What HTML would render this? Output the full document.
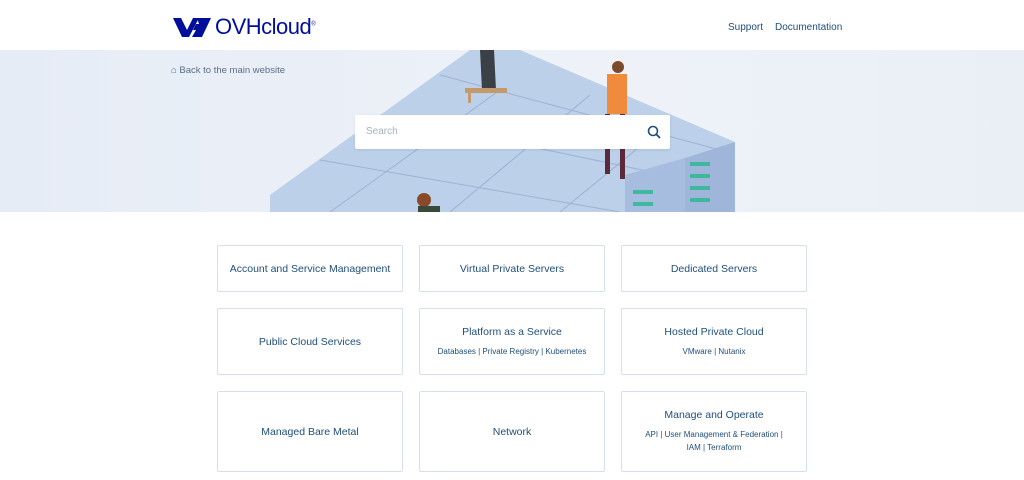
<!DOCTYPE html>
<html><head><meta charset="utf-8"><style>
*{margin:0;padding:0;box-sizing:border-box}
body{width:1024px;height:480px;background:#fff;font-family:"Liberation Sans",sans-serif;position:relative;overflow:hidden;color:#1f4e79}
.hdr{position:absolute;top:0;left:0;width:1024px;height:50px;background:#fff}
.logo{position:absolute;left:173px;top:14px;font-size:22px;color:#000e9c;letter-spacing:-0.5px}
.nav{position:absolute;top:22px;font-size:10px;color:#1f4e79}
.hero{position:absolute;top:50px;left:0;width:1024px;height:162px;background:linear-gradient(90deg,#e6ecf6,#eef2f8 60%,#eaeff6);overflow:hidden}
.back{position:absolute;left:171px;top:65px;font-size:9.5px;color:#5a6e88}
.search{position:absolute;left:355px;top:115px;width:315px;height:34px;background:#fff;border-radius:2px;box-shadow:0 1px 3px rgba(0,0,0,.08)}
.search span{position:absolute;left:11px;top:11px;font-size:10px;color:#a8b0ba}
.card{position:absolute;width:186px;border:1px solid #d4e0ee;border-radius:2px;display:flex;flex-direction:column;align-items:center;justify-content:center;text-align:center;color:#1f4e79}
.t{font-size:10.5px}
.s{font-size:8px;margin-top:7px;line-height:13px}
</style></head><body>
<div class="hdr">
<svg style="position:absolute;left:173px;top:16px" width="38" height="22" viewBox="0 0 38 22"><path d="M0 2h8l6 12 6-12h6L16 21H9Z" fill="#000e9c"/><path d="M24 2h14L29 21h-10l4-7h-3l3-6h3Z" fill="#000e9c"/></svg>
<div class="logo" style="left:215px">OVHcloud<sup style="font-size:6px">®</sup></div>
<div class="nav" style="left:728px">Support</div>
<div class="nav" style="left:775px">Documentation</div>
</div>
<div class="hero">
<svg width="1024" height="162" style="position:absolute;left:0;top:0">
<polygon points="270,145 470,0 520,0 735,92 735,162 270,162" fill="#bcd0ea"/>
<g stroke="#8fa6c8" stroke-width="1" fill="none" opacity=".7">
<path d="M320,110 L620,162"/><path d="M380,65 L690,130"/><path d="M440,25 L720,100"/>
<path d="M330,162 L500,40"/><path d="M450,162 L590,45"/><path d="M560,162 L660,80"/>
</g>
<polygon points="625,125 685,108 685,162 625,162" fill="#a6bddf"/>
<polygon points="685,108 735,92 735,162 685,162" fill="#9fb6da"/>
<g fill="#3fb8a0"><rect x="690" y="112" width="20" height="4"/><rect x="690" y="124" width="20" height="4"/><rect x="690" y="136" width="20" height="4"/><rect x="690" y="148" width="20" height="4"/><rect x="633" y="140" width="20" height="4"/><rect x="633" y="152" width="20" height="4"/></g>
<path d="M480,0h14l2,40h-14Z" fill="#3a4046"/><rect x="465" y="38" width="42" height="5" fill="#c49a6c"/><rect x="468" y="43" width="3" height="10" fill="#c49a6c"/>
<circle cx="618" cy="17" r="6" fill="#7a4a2a"/>
<rect x="607" y="24" width="20" height="40" fill="#f08a3c"/><rect x="605" y="64" width="5" height="60" fill="#5b2a3a"/><rect x="620" y="64" width="5" height="65" fill="#5b2a3a"/>
<circle cx="424" cy="150" r="7" fill="#8a4a2a"/><rect x="418" y="156" width="22" height="8" fill="#3a4a3a"/>
</svg>
</div>
<div class="back">⌂ Back to the main website</div>
<div class="search"><span>Search</span>
<svg style="position:absolute;left:292px;top:10px" width="14" height="14" viewBox="0 0 14 14"><circle cx="6" cy="6" r="4.5" stroke="#1f4e79" stroke-width="1.6" fill="none"/><path d="M9.3 9.3L13 13" stroke="#1f4e79" stroke-width="1.8"/></svg></div>
<div class="card" style="left:217px;top:245px;height:47px"><div class="t">Account and Service Management</div></div>
<div class="card" style="left:419px;top:245px;height:47px"><div class="t">Virtual Private Servers</div></div>
<div class="card" style="left:621px;top:245px;height:47px"><div class="t">Dedicated Servers</div></div>
<div class="card" style="left:217px;top:308px;height:67px"><div class="t">Public Cloud Services</div></div>
<div class="card" style="left:419px;top:308px;height:67px"><div class="t">Platform as a Service</div><div class="s">Databases | Private Registry | Kubernetes</div></div>
<div class="card" style="left:621px;top:308px;height:67px"><div class="t">Hosted Private Cloud</div><div class="s">VMware | Nutanix</div></div>
<div class="card" style="left:217px;top:391px;height:81px"><div class="t">Managed Bare Metal</div></div>
<div class="card" style="left:419px;top:391px;height:81px"><div class="t">Network</div></div>
<div class="card" style="left:621px;top:391px;height:81px"><div class="t">Manage and Operate</div><div class="s">API | User Management &amp; Federation |<br>IAM | Terraform</div></div>
</body></html>
